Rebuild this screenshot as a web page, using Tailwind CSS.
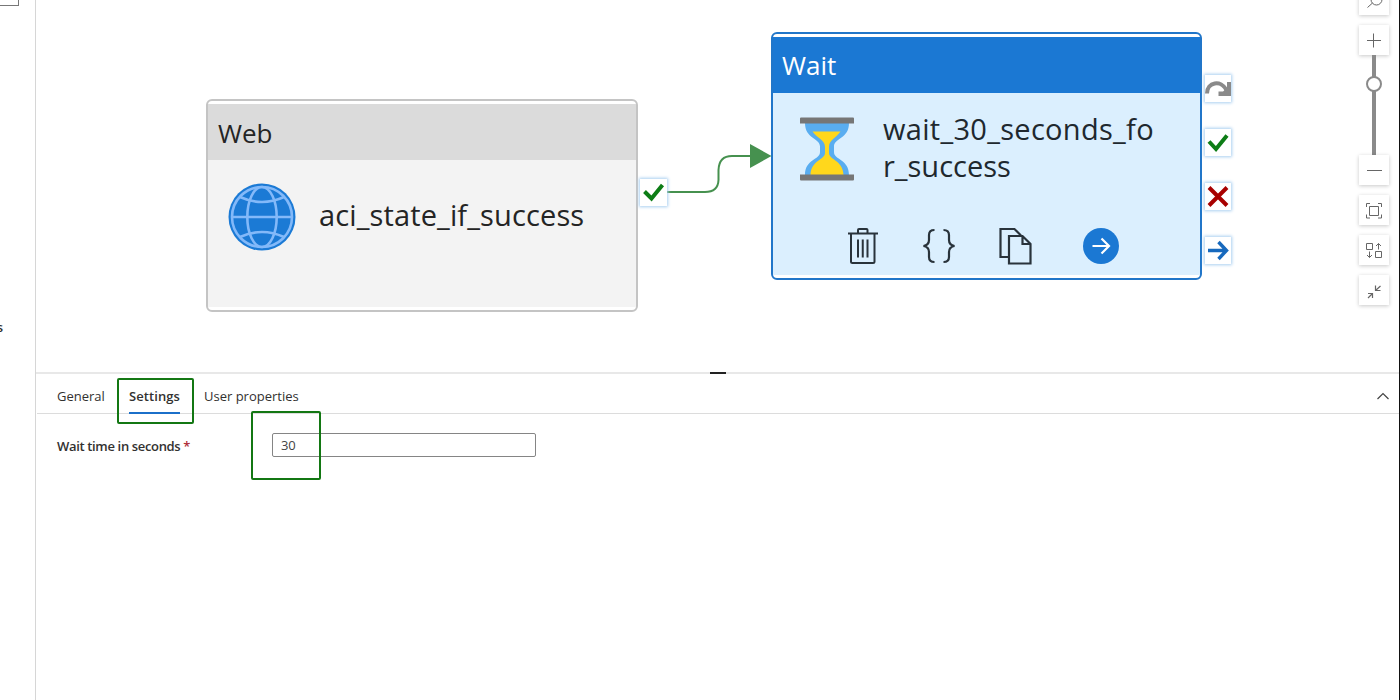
<!DOCTYPE html>
<html lang="en">
<head>
<meta charset="utf-8">
<title>Pipeline editor</title>
<script src="https://cdn.jsdelivr.net/npm/@tailwindcss/browser@4"></script>
</head>
<body class="flex h-[700px] w-[1400px] overflow-hidden bg-white font-['Open_Sans',sans-serif] text-[#323130]">
<aside class="relative h-full w-[36px] shrink-0 overflow-hidden border-r border-[#d6d6d6]">
  <div class="-ml-2 -mt-2 h-[14px] w-[27px] border border-[#777]"></div>
  <div class="mt-[311px] flex w-[3px] justify-end text-[13px] leading-[20px] font-semibold">s</div>
</aside>
<main class="flex min-w-0 grow flex-col">
  <section class="relative h-[372px] shrink-0 overflow-hidden">
    <!-- Web activity -->
    <article class="absolute left-[170px] top-[99px] flex h-[213px] w-[432px] flex-col rounded-[6px] border-2 border-[#c4c4c4] bg-white pt-[3px] pb-[3px]">
      <header class="flex h-[56px] shrink-0 items-center bg-[#dbdbdb] pt-[2px] pl-[10px] text-[26px] leading-none text-[#242424]"><span>Web</span></header>
      <div class="flex grow gap-[23px] bg-[#f3f3f3] pl-[20px] pt-[23px]">
        <svg class="size-[68px] shrink-0" viewBox="0 0 68 68" fill="none" stroke="#83b9f9" stroke-width="2.6"><circle cx="34" cy="34" r="33.5" fill="#1b7ad5" stroke="none"/><circle cx="34" cy="34" r="30"/><ellipse cx="34" cy="34" rx="14.7" ry="30"/><path d="M4 34h60M12 14Q34 24 56 14M12 54Q34 44 56 54"/></svg>
        <span class="mt-[13px] text-[29px] leading-[38px] tracking-[0.13px] whitespace-nowrap text-[#242424]">aci_state_if_success</span>
      </div>
    </article>

    <!-- Wait activity -->
    <article class="absolute left-[735px] top-[32px] flex h-[248px] w-[431px] flex-col rounded-[6px] border-2 border-[#2176c9] bg-white pt-[3px] pb-[3px]">
      <header class="flex h-[56px] shrink-0 items-center bg-[#1b78d3] pl-[9px] text-[26px] leading-none text-white"><span>Wait</span></header>
      <div class="flex grow flex-col bg-[#dbeffe]">
        <div class="flex h-[134px] gap-[29px] pl-[27px] pt-[18px]">
          <svg class="h-[76px] w-[54px] shrink-0" viewBox="0 0 54 76"><path fill="#59adf0" d="M5 12H49C49 28 34 27 34 35.500V41C34 49 49 48 49 64H5C5 48 20 49 20 41V35.500C20 27 5 28 5 12Z"/><path fill="#ffd71c" d="M12.500 20.500H40.500C36 27 29 29 29 36V42C29 49 43 49 43.500 64H10.500C11 49 25 49 25 42V36C25 29 17 27 12.500 20.500Z"/><path fill="#767676" d="M1 6.500H53a1 1 0 011 1v5H0v-5a1 1 0 011-1ZM0 63.500H54v5a1 1 0 01-1 1H1a1 1 0 01-1-1Z"/></svg>
          <div class="-mt-px text-[29px] leading-[37px] whitespace-nowrap text-[#20282e]"><div class="tracking-[0.3px]">wait_30_seconds_fo</div><div>r_success</div></div>
        </div>
        <div class="flex h-[38px] items-center pl-[75px] text-[#29333b]">
          <svg class="h-[36px] w-[30px]" viewBox="0 0 30 36" fill="none" stroke="currentColor" stroke-width="2"><path d="M0 5.500H30M10 5V2Q10 1 11 1H18.500Q19.500 1 19.500 2V5M3 6V33.500Q3 35 4.500 35H25Q26.500 35 26.500 33.500V6M10 11.500V29.500M14.750 11.500V29.500M19.500 11.500V29.500"/></svg>
          <svg class="ml-[45px] h-[36px] w-[32px]" viewBox="0 0 32 36" fill="none" stroke="currentColor" stroke-width="2.200"><path d="M11.500 2C7.500 2 6 3.500 6 7V12Q6 17 0.500 18Q6 19 6 24V29C6 32.500 7.500 34 11.500 34M20.500 2C24.500 2 26 3.500 26 7V12Q26 17 31.500 18Q26 19 26 24V29C26 32.500 24.500 34 20.500 34"/></svg>
          <svg class="ml-[44px] h-[38px] w-[33px]" viewBox="0 0 33 38" fill="none" stroke="currentColor" stroke-width="2.200"><path d="M10 30H1.500V2H15.500L22 8.500M10 9H23.500L31.500 17V36.500H10ZM23.500 9V17H31.500"/></svg>
          <svg class="ml-[51px] size-[36px]" viewBox="0 0 36 36"><circle cx="18" cy="18" r="18" fill="#1b78d3"/><path d="M9.500 18H26M18.500 10.500L26 18L18.500 25.500" fill="none" stroke="#fff" stroke-width="2.200"/></svg>
        </div>
      </div>
    </article>

    <!-- Success connector -->
    <svg class="absolute left-[631px] top-[140px] h-[58px] w-[106px]" viewBox="0 0 106 58"><path d="M0 52H38Q51 52 51.500 40V30Q52 16 65 16H84" fill="none" stroke="#46914f" stroke-width="2"/><path d="M83 4L104.500 16L83 28Z" fill="#46914f"/></svg>
    <div class="absolute left-[604px] top-[179px] flex size-[27px] items-center justify-center bg-white shadow-[0_0_3px_1px_#a9cff0]"><svg class="size-[27px]" viewBox="0 0 27 27" fill="none" stroke="#0d7d16" stroke-width="4"><path d="M4.500 12.500L11.500 19.500L22.500 6"/></svg></div>

    <!-- Output ports -->
    <div class="absolute left-[1169px] top-[75px] flex flex-col gap-[27px]">
      <div class="h-[27px] w-[26px] bg-white shadow-[0_0_3px_1px_#a9cff0]"><svg class="h-[27px] w-[26px]" viewBox="0 0 26 27"><path d="M2 18.500C2 7 16 4.500 21.500 15" fill="none" stroke="#8a8a8a" stroke-width="4"/><path fill="#8a8a8a" d="M26 7V21H13.500V16.500H18L22 13V7Z"/></svg></div>
      <div class="h-[27px] w-[26px] bg-white shadow-[0_0_3px_1px_#a9cff0]"><svg class="h-[27px] w-[26px]" viewBox="0 0 26 27" fill="none" stroke="#0d7d16" stroke-width="4"><path d="M4 12.500L11 20L22 6.500"/></svg></div>
      <div class="h-[27px] w-[26px] bg-white shadow-[0_0_3px_1px_#a9cff0]"><svg class="h-[27px] w-[26px]" viewBox="0 0 26 27" fill="none" stroke="#a80000" stroke-width="4"><path d="M4 4.500L22 22.500M22 4.500L4 22.500"/></svg></div>
      <div class="h-[27px] w-[26px] bg-white shadow-[0_0_3px_1px_#a9cff0]"><svg class="h-[27px] w-[26px]" viewBox="0 0 26 27" fill="none" stroke="#1769bd" stroke-width="3.400"><path d="M3 13.500H21.500M13.500 5L21.500 13.500L13.500 22"/></svg></div>
    </div>

    <!-- Canvas controls -->
    <div class="absolute right-[11px] top-[-15px] flex w-[30px] flex-col items-center text-[#666]">
      <div class="size-[30px] bg-white shadow-[0_1px_4px_#00000038]"><svg class="size-[30px]" viewBox="0 0 30 30" fill="none" stroke="currentColor"><circle cx="17.500" cy="14.500" r="5.500"/><path d="M13.500 18L8.500 22.500"/></svg></div>
      <div class="mt-[10px] size-[30px] bg-white shadow-[0_1px_4px_#00000038]"><svg class="size-[30px]" viewBox="0 0 30 30" stroke="currentColor"><path d="M8 15.500H22M14.500 8.500V22.500"/></svg></div>
      <div class="flex h-[100px] w-[4px] justify-center bg-[#8a8a8a]"><div class="mt-[21px] size-[16px] shrink-0 rounded-full border-2 border-[#8a8a8a] bg-white"></div></div>
      <div class="size-[30px] bg-white shadow-[0_1px_4px_#00000038]"><svg class="size-[30px]" viewBox="0 0 30 30" stroke="currentColor"><path d="M8 15.500H23"/></svg></div>
      <div class="mt-[10px] size-[30px] bg-white shadow-[0_1px_4px_#00000038]"><svg class="size-[30px]" viewBox="0 0 30 30" fill="none" stroke="currentColor"><path d="M10.500 11.500H19.500V20.500H10.500ZM7.500 12V8.500H11M19 8.500H22.500V12M22.500 19.500V23H19M11 23H7.500V19.500"/></svg></div>
      <div class="mt-[10px] size-[30px] bg-white shadow-[0_1px_4px_#00000038]"><svg class="size-[30px]" viewBox="0 0 30 30" fill="none" stroke="currentColor"><path d="M7.500 8.500H13.500V14.500H7.500ZM16.500 16.500H22.500V22.500H16.500ZM19.500 14.500V8.500M17 11L19.500 8.500L22 11M10.500 16.500V22.500M8 20L10.500 22.500L13 20"/></svg></div>
      <div class="mt-[10px] size-[30px] bg-white shadow-[0_1px_4px_#00000038]"><svg class="size-[30px]" viewBox="0 0 30 30" fill="none" stroke="currentColor" stroke-width="1.200"><path d="M21.500 11L16.500 15.500M16.500 10.500V15.500H21.500M9 23L13.500 18.500M9 18.500H13.500V23"/></svg></div>
    </div>
  </section>

  <!-- Properties panel -->
  <section class="relative flex grow flex-col">
    <div class="flex h-[2px] bg-[#e8e8e8] pl-[674px]"><div class="h-[2px] w-[16px] bg-[#222]"></div></div>
    <nav class="ml-px flex h-[40px] items-stretch border-b border-[#dcdcdc] pl-[20px] text-[13px] leading-[44px]">
      <span class="w-[72px]">General</span>
      <span class="h-[40px] w-[51px] border-b-2 border-[#1b6fc9] font-semibold tracking-[0.08px] whitespace-nowrap">Settings</span>
      <span class="ml-[24px] whitespace-nowrap">User properties</span>
      <svg class="mt-[18px] ml-auto mr-[11px] h-[10px] w-[12px]" viewBox="0 0 12 10" fill="none" stroke="#444" stroke-width="1.200"><path d="M.5 7L6 1.500L11.500 7"/></svg>
    </nav>
    <div class="flex items-center pl-[21px] pt-[19px]">
      <label for="seconds" class="w-[215px] pt-[2px] text-[13px] leading-[22px] font-semibold"><span class="tracking-[-0.34px]">Wait time in seconds</span><span class="ml-[3px] text-[#b0303a]">*</span></label>
      <input id="seconds" value="30" class="h-[24px] w-[264px] rounded-[2px] border border-[#858585] bg-white px-2 text-[13px] tracking-[-0.2px] text-[#444] outline-none">
    </div>
    <div class="absolute left-[81px] top-[6px] h-[46px] w-[77px] rounded-[2px] border-2 border-[#137713]"></div>
    <div class="absolute left-[215px] top-[39px] h-[69px] w-[70px] rounded-[2px] border-2 border-[#137713]"></div>
  </section>
</main>
<div class="absolute top-0 right-0 h-full w-px bg-[#111]"></div>
</body>
</html>
